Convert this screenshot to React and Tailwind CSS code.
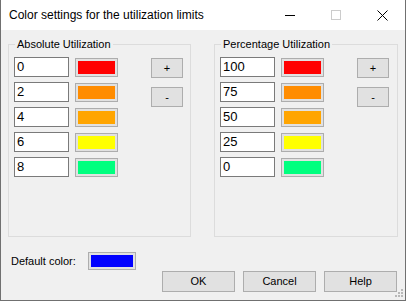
import React from 'react'

const absRows = [
  { value: '0', color: 'bg-[#ff0000]' },
  { value: '2', color: 'bg-[#ff8c00]' },
  { value: '4', color: 'bg-[#ffa500]' },
  { value: '6', color: 'bg-[#ffff00]' },
  { value: '8', color: 'bg-[#00ff7f]' },
]

const pctRows = [
  { value: '100', color: 'bg-[#ff0000]' },
  { value: '75', color: 'bg-[#ff8c00]' },
  { value: '50', color: 'bg-[#ffa500]' },
  { value: '25', color: 'bg-[#ffff00]' },
  { value: '0', color: 'bg-[#00ff7f]' },
]

const ColorButton = ({ color, className = '' }) => (
  <div className={`flex border border-[#adadad] bg-[#e1e1e1] p-[2px] ${className}`}>
    <div className={`flex-1 ${color}`} />
  </div>
)

const Button = ({ children, className = '' }) => (
  <div
    className={`flex items-center justify-center border border-[#adadad] bg-[#e1e1e1] ${className}`}
  >
    {children}
  </div>
)

const Group = ({ title, rows, className = '' }) => (
  <fieldset className={`h-[199px] border border-[#dcdcdc] p-0 m-0 ${className}`}>
    <legend className="ml-[6px] px-[2px] leading-[13px]">{title}</legend>
    <div className="flex pl-[5px] pt-[6px]">
      <div className="flex flex-col gap-[5px]">
        {rows.map((r, i) => (
          <div key={i} className="flex items-start">
            <div className="h-[20px] w-[55px] border border-[#7a7a7a] bg-white pl-[2px] text-[13px] leading-[18px]">
              {r.value}
            </div>
            <ColorButton color={r.color} className="ml-[6px] mt-[1px] h-[19px] w-[43px]" />
          </div>
        ))}
      </div>
      <div className="ml-[33px] mt-[1px] flex flex-col gap-[9px]">
        <Button className="h-[20px] w-[32px]">+</Button>
        <Button className="h-[20px] w-[32px]">-</Button>
      </div>
    </div>
  </fieldset>
)

export default function App() {
  return (
    <div className="relative flex h-[301px] w-[406px] flex-col border-x border-b border-[#707070] bg-[#f0f0f0] font-['Liberation_Sans',Arial,sans-serif] text-[11px] text-black">
      <div className="flex h-[30px] items-center bg-white">
        <span className="pl-[8px] text-[12px]">Color settings for the utilization limits</span>
        <div className="ml-auto flex h-full">
          <div className="flex w-[46px] items-center justify-center">
            <svg width="10" height="10" viewBox="0 0 10 10">
              <path d="M0 5.5H10" stroke="#000" strokeWidth="1" />
            </svg>
          </div>
          <div className="flex w-[46px] items-center justify-center">
            <svg width="10" height="10" viewBox="0 0 10 10">
              <rect x="0.5" y="0.5" width="9" height="9" fill="none" stroke="#cccccc" strokeWidth="1" />
            </svg>
          </div>
          <div className="flex w-[46px] items-center justify-center">
            <svg width="11" height="11" viewBox="0 0 11 11">
              <path d="M0.5 0.5L10.5 10.5M10.5 0.5L0.5 10.5" stroke="#000" strokeWidth="1" />
            </svg>
          </div>
        </div>
      </div>

      <div className="flex flex-1 flex-col px-[7px] pt-[8px]">
        <div className="flex">
          <Group title="Absolute Utilization" rows={absRows} className="w-[183px]" />
          <Group title="Percentage Utilization" rows={pctRows} className="ml-[23px] w-[184px]" />
        </div>

        <div className="mt-[15px] flex h-[18px] items-center">
          <span className="ml-[3px] w-[77px]">Default color:</span>
          <ColorButton color="bg-[#0000ff]" className="h-[18px] w-[48px]" />
        </div>

        <div className="mt-[1px] flex justify-end gap-[8px] pr-[1px]">
          <Button className="h-[21px] w-[73px]">OK</Button>
          <Button className="h-[21px] w-[73px]">Cancel</Button>
          <Button className="h-[21px] w-[73px]">Help</Button>
        </div>
      </div>

      <svg className="absolute bottom-[2px] right-[1px]" width="10" height="10" viewBox="0 0 10 10">
        <rect x="7" y="1" width="2" height="2" fill="#b8b8b8" />
        <rect x="4" y="4" width="2" height="2" fill="#b8b8b8" />
        <rect x="7" y="4" width="2" height="2" fill="#b8b8b8" />
        <rect x="1" y="7" width="2" height="2" fill="#b8b8b8" />
        <rect x="4" y="7" width="2" height="2" fill="#b8b8b8" />
        <rect x="7" y="7" width="2" height="2" fill="#b8b8b8" />
      </svg>
    </div>
  )
}
